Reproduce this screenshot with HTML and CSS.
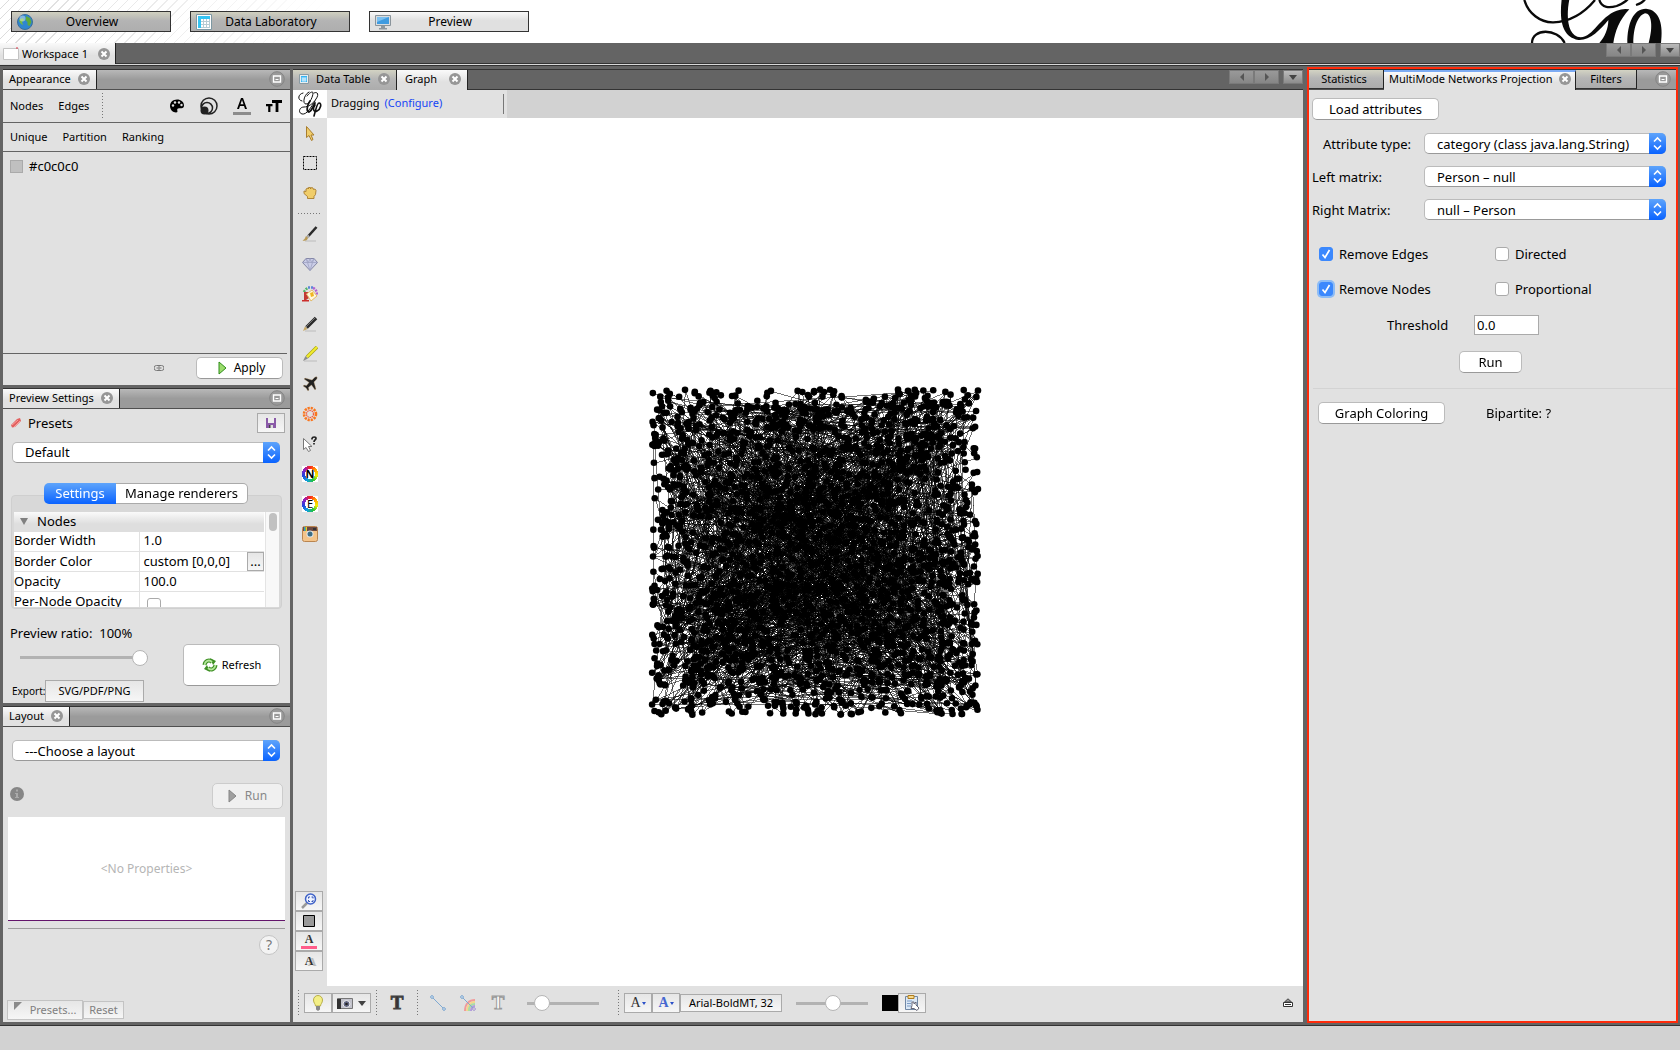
FILE: index.html
```html
<!DOCTYPE html>
<html lang="en">
<head>
<meta charset="utf-8">
<title>Gephi - Workspace 1</title>
<link rel="stylesheet" href="styles.css">
</head>
<body>
<svg class="sprite" aria-hidden="true">
  <symbol id="close" viewBox="0 0 12 12"><circle cx="6" cy="6" r="6" fill="#969696"/><path d="M3.5 3.5l5 5M8.5 3.5l-5 5" stroke="#fff" stroke-width="2"/></symbol>
  <symbol id="mini" viewBox="0 0 16 16"><circle cx="8" cy="8" r="7.3" fill="#999" stroke="#858585"/><path d="M4.5 5h7v6h-7z" fill="none" stroke="#fff" stroke-width="1.4"/><path d="M6.500 8.500h3" stroke="#fff"/></symbol>
  <symbol id="updown" viewBox="0 0 17 21"><path d="M5 8.500l3.500-3.500 3.500 3.500M5 12.500l3.500 3.500 3.500-3.500" fill="none" stroke="#fff" stroke-width="1.600"/></symbol>
  <symbol id="gephi" viewBox="0 0 26 26"><g fill="none" stroke="#111" stroke-linecap="round"><path d="M5 10C0 9 1 3 6 2M12 1C7 3 5 13 9 13c4 0 7-8 7-11 0-2-3-1-6 3" stroke-width="1"/><path d="M17 2c4-2 5 2 2 6-3 5-8 8-12 8-5 0-6 6-2 7 5 1 9-7 13-13" stroke-width="1"/><path d="M13 10c-3 4-4 11-1 11 3-1 4-6 6-9" stroke-width="1.800"/><path d="M18 14c-3 4-1 8 2 6 4-2 5-8 2-8-2 0-3 6-5 13" stroke-width="1.600"/></g></symbol>
  <symbol id="sheet" viewBox="0 0 16 16"><path d="M.5.5h15v15H.5z" fill="#fff" stroke="#7d98a3"/><path d="M2 2h12v3H2zM2 2h3v12H2z" fill="#35c4f3"/><path d="M5 7.500h9M5 10.500h9M5 13.500h9M7.500 5v9M10.500 5v9M13.500 5v9" stroke="#b6ccd4"/></symbol>
  <symbol id="sheet-small" viewBox="0 0 10 10"><path d="M.5.5h9v9h-9z" fill="#e8eef0" stroke="#8a9ba3"/><path d="M2 2h6v6H2z" fill="#35b4f3"/><path d="M2.500 4h5M2.500 6h5M4 4v4M6 4v4" stroke="#fff" stroke-width=".8"/></symbol>
</svg>

<header class="banner">
  <nav class="views">
    <button class="view"><svg viewBox="0 0 16 16"><circle cx="8" cy="8" r="7.500" fill="#2f86cf" stroke="#3a6e9c"/><path d="M3 5l3-1 1 2-2 2 1 3-2-1-2-3z" fill="#75b843"/><path d="M9 2l4 2 1.500 4-2 4-2-1V8L8.500 6z" fill="#5faa3b"/><circle cx="5.500" cy="4.500" r="3" fill="#fff" opacity=".4"/></svg><span>Overview</span></button>
    <button class="view"><svg viewBox="0 0 16 16"><use href="#sheet"/></svg><span>Data Laboratory</span></button>
    <button class="view light"><svg viewBox="0 0 16 16"><path d="M.5 1.500h15v10H.5z" fill="#d9dde0" stroke="#8a949b"/><path d="M2 3h12v7H2z" fill="#3f9be0"/><path d="M2 3h12L2 8z" fill="#7cc0f0"/><path d="M6 12h4v2h2v1.500H4V14h2z" fill="#8d979e"/></svg><span>Preview</span></button>
  </nav>
  <svg class="brand" viewBox="720 0 441 129" role="img" aria-label="Gephi">
    <g fill="none" stroke="#0a0a0a"><path d="M733 0C745 40 780 68 820 67C880 65 920 30 945 0" stroke-width="7"/><path d="M756 129C756 84 832 84 854 129" stroke-width="7"/><path d="M958 0C965 25 990 24 1010 18C1030 10 1042 0 1046-6M1068 15Q1090 8 1096-4" stroke-width="7"/></g>
    <path d="M845-2H868C858 50 862 110 902 112C940 110 960 50 1010 32Q1030 24 1048 28C1018 60 1005 95 1000 129H958C975 110 985 85 985 60C960 90 930 122 895 120C845 110 838 60 845-2Z" fill="#0a0a0a"/>
    <path d="M1042 129C1042 70 1060 26 1098 26C1140 30 1150 75 1143 129H1106C1120 80 1115 40 1095 40C1070 48 1060 90 1060 129Z" fill="#0a0a0a"/>
  </svg>
</header>

<div class="workspaces">
  <div class="tab ws"><svg class="i16" viewBox="0 0 16 14"><path d="M.5 1.500h15v11H.5z" fill="#fff" stroke="#c3c3c3"/><path d="M13 1h2" stroke="#d34"/></svg><span>Workspace 1</span><svg class="x"><use href="#close"/></svg></div>
  <div class="pager"><button aria-label="Previous"><i class="tri l"></i></button><button aria-label="Next"><i class="tri r"></i></button><button class="dd" aria-label="List"><i class="tri d"></i></button></div>
</div>

<main class="desk">
  <aside class="left">
    <section class="panel">
      <div class="tabs shaded"><div class="tab"><span>Appearance</span><svg class="x"><use href="#close"/></svg></div><svg class="min"><use href="#mini"/></svg></div>
      <div class="row elements">
        <a href="#">Nodes</a><a href="#">Edges</a><i class="vdots"></i>
        <span class="kinds">
          <svg class="i16" viewBox="0 0 16 16"><path d="M8 1.500C4 1.500 1 4.300 1 8s3 6.500 6 6.500c1.600 0 1.600-1 1.300-2-.4-1.500.5-2.300 1.700-2.300h2.500c1.500 0 2.500-1 2.500-2.700C15 4 12 1.500 8 1.500z"/><g fill="#e1e1e1"><circle cx="4" cy="7.500" r="1.200"/><circle cx="6" cy="4.500" r="1.200"/><circle cx="10" cy="4.500" r="1.200"/><circle cx="12.500" cy="7" r="1.200"/></g></svg>
          <svg class="i18" viewBox="0 0 18 18"><g fill="none" stroke="#222" stroke-width="1.500"><circle cx="9" cy="9" r="8"/><circle cx="7" cy="11" r="5.500"/></g><circle cx="4.500" cy="13.500" r="4" fill="#222"/></svg>
          <svg class="i18" viewBox="0 0 18 18"><path d="M4 12L8 1h2l4 11h-2l-1-3H7l-1 3zM7.500 7.300h3L9 3z" /><path d="M0 15h18v3H0z" fill="#8c8c8c"/></svg>
          <svg class="i16" viewBox="0 0 16 16"><path d="M6 2h10v3h-3.600v9H9.600V5H6zM0 6h6.500v2.300H4.400V14H2.200V8.300H0z"/></svg>
        </span>
      </div>
      <div class="row modes"><a href="#">Unique</a><a href="#">Partition</a><a href="#">Ranking</a></div>
      <div class="swatchrow"><i class="swatch"></i><span>#c0c0c0</span></div>
      <div class="applybar"><svg class="link" viewBox="0 0 10 6"><path d="M2.500.500h5a2.200 2.200 0 0 1 0 5h-5a2.200 2.200 0 0 1 0-5z" fill="none" stroke="#777"/><path d="M2.500 3h2M5.500 3h2M5 1v4" stroke="#777"/></svg><button class="btn apply"><svg viewBox="0 0 9 14"><path d="M1 1v12l7-6z" fill="#9bdc6c" stroke="#2f8d1b"/></svg>Apply</button></div>
    </section>

    <section class="panel">
      <div class="tabs shaded"><div class="tab"><span>Preview Settings</span><svg class="x"><use href="#close"/></svg></div><svg class="min"><use href="#mini"/></svg></div>
      <div class="presets"><svg class="i10" viewBox="0 0 10 10"><path d="M0 7l6-6 3-1 1 3-6 6-3 .5z" fill="#e2605f"/><path d="M1 7l6-5M3 9l6-6" stroke="#f6a09e"/></svg><span>Presets</span><button class="sq save" aria-label="Save preset"><svg viewBox="0 0 10 10"><path d="M0 0h10v10H0z" fill="#8a5aa8"/><path d="M2 0h6v5H2z" fill="#eee"/><path d="M3 7h4v3H3z" fill="#ddd"/><path d="M3 7h1.500v3H3z" fill="#444"/></svg></button></div>
      <div class="combo wide"><select aria-label="Preset"><option>Default</option></select><svg><use href="#updown"/></svg></div>
      <div class="segments"><button class="on">Settings</button><button>Manage renderers</button></div>
      <div class="group">
        <div class="scroll">
          <table>
            <tr><th colspan="2"><div class="cat"><i class="tri d"></i>Nodes</div></th></tr>
            <tr><td>Border Width</td><td>1.0</td></tr>
            <tr><td>Border Color</td><td><div class="cell">custom [0,0,0]<button class="sq" aria-label="Edit color">...</button></div></td></tr>
            <tr><td>Opacity</td><td>100.0</td></tr>
            <tr><td>Per-Node Opacity</td><td><input type="checkbox" aria-label="Per-Node Opacity"></td></tr>
          </table>
          <div class="track"><i></i></div>
        </div>
      </div>
      <div class="ratio">
        <div class="rleft"><label for="ratio">Preview ratio:&nbsp; 100%</label><input id="ratio" type="range" value="100">
        <div class="export"><span>Export:</span><button class="sq">SVG/PDF/PNG</button></div></div>
        <button class="btn refresh"><svg viewBox="0 0 16 16"><g fill="none" stroke="#3d8f24" stroke-width="4"><path d="M2.500 8C3 4 7 2 10 5M13.500 8C13 12 9 14 6 11"/></g><path d="M8 1l3 7 3-4zM8 15L5 8l-3 4z" fill="#3d8f24"/><g fill="none" stroke="#b4e79a" stroke-width="1.800"><path d="M2.500 8C3 4 7 2 10 5M13.500 8C13 12 9 14 6 11"/></g></svg>Refresh</button>
      </div>
    </section>

    <section class="panel">
      <div class="tabs shaded"><div class="tab"><span>Layout</span><svg class="x"><use href="#close"/></svg></div><svg class="min"><use href="#mini"/></svg></div>
      <div class="combo wide layoutsel"><select aria-label="Layout"><option>---Choose a layout</option></select><svg><use href="#updown"/></svg></div>
      <div class="runrow"><svg class="i14" viewBox="0 0 14 14"><circle cx="7" cy="7" r="7" fill="#868686"/><path d="M6 2.500h2v2H6zM5 6h3v4h1v1H5v-1h1V7H5z" fill="#aaa"/></svg><button class="btn off" disabled><svg viewBox="0 0 9 14"><path d="M1 1v12l7-6z" fill="#a0a0a0" stroke="#868686"/></svg>Run</button></div>
      <div class="props">&lt;No Properties&gt;</div>
      <div class="helpline"><button class="help" aria-label="Help">?</button></div>
      <div class="foot"><button class="sq" disabled><svg viewBox="0 0 8 8"><path d="M0 0h8L0 8z" fill="#8a8a8a"/></svg>Presets...</button><button class="sq reset" disabled>Reset</button></div>
    </section>
  </aside>

  <section class="center">
    <div class="tabs plain">
      <div class="tab dim dt"><svg class="i10"><use href="#sheet-small"/></svg><span>Data Table</span><svg class="x"><use href="#close"/></svg></div>
      <div class="tab gr"><span>Graph</span><svg class="x"><use href="#close"/></svg></div>
      <div class="pager"><button aria-label="Previous"><i class="tri l"></i></button><button aria-label="Next"><i class="tri r"></i></button><button class="dd" aria-label="List"><i class="tri d"></i></button></div>
    </div>
    <div class="infobar"><svg class="gl"><use href="#gephi" x="4" y="1" width="26" height="26"/></svg><div class="drag"><span>Dragging</span><a href="#">(Configure)</a></div></div>
    <div class="work">
      <div class="tools">
        <button aria-label="Select"><svg viewBox="0 0 16 16"><path d="M4.500 1.500v11l2.500-2 2.500 5 1.500-1-2-4.500h3z" fill="#f0cd6a" stroke="#a87d2e"/></svg></button>
        <button aria-label="Rectangle selection"><svg viewBox="0 0 16 16"><path d="M1.500 1.500h13v13h-13z" fill="none" stroke="#000" stroke-dasharray="2 1"/></svg></button>
        <button aria-label="Drag"><svg viewBox="0 0 16 16"><path d="M5.500 13.500v-2L2 8.500V6l2 .500V4l2-1 .500 1V2.500h2V4l1-1.500 1.500.500.500 1.500 1.500-.500 1 1.500-.500 4-1.500 2v2z" fill="#f0cd6a" stroke="#a87d2e" stroke-width=".9"/></svg></button>
        <i class="hdots"></i>
        <button aria-label="Brush"><svg viewBox="0 0 16 16"><path d="M3 15h11" stroke="#bbb"/><path d="M14.500 1L6 10.500" stroke="#2b2b2b" stroke-width="2.600"/><path d="M7 9.500l-2 2" stroke="#aaa" stroke-width="2.500"/><path d="M4 10l2 2c-1 3-3 3-5.500 2.500C3 13 3 12 4 10z" fill="#b99a56"/></svg></button>
        <button aria-label="Sizer"><svg viewBox="0 0 16 16"><path d="M4 2.500h8l3.500 4-7.500 8-7.500-8z" fill="#c9cce6" stroke="#8487a5"/><path d="M.5 6.500h15M4 2.500l1.500 4 2.500 8 2.500-8 1.500-4-2.500 4L8 2.500l-1.500 4z" fill="none" stroke="#9ea2c3" stroke-width=".8"/></svg></button>
        <button aria-label="Painter"><svg viewBox="0 0 16 16"><g fill="none" stroke-width="2.500" stroke-dasharray="2 1"><path d="M2 6a7 7 0 0 1 4-4" stroke="#53b56b"/><path d="M6 1.500h5" stroke="#5b86d8"/><path d="M11 2c3 1 4 4 4 7" stroke="#b363d2"/></g><path d="M2 6h5v6l-3 2-2 1z" fill="#c23a35"/><path d="M0 14h7v1.500H0z" fill="#cc2d2b"/><path d="M4.500 8l5.500-4 5 6-6 5z" fill="#fff8df" stroke="#e2bb6a"/><path d="M8 7l3-1 1 4-3 1z" fill="#f0b524"/></svg></button>
        <button aria-label="Node pencil"><svg viewBox="0 0 16 16"><path d="M3 15h11" stroke="#bbb"/><path d="M14 2L4.500 11.500" stroke="#2a2a2a" stroke-width="3.600"/><path d="M13 2L4 11" stroke="#777"/><path d="M3 10.500l2.500 2.500L1 15z" fill="#c5a765"/></svg></button>
        <button aria-label="Edge pencil"><svg viewBox="0 0 16 16"><path d="M2 15h13" stroke="#bbb"/><path d="M15 1L5 11" stroke="#a9a315" stroke-width="3.400"/><path d="M15 1L5 11" stroke="#f2ec2e" stroke-width="2"/><path d="M3.500 10l2.500 2.500L1 15z" fill="#8a8a8a"/></svg></button>
        <button aria-label="Shortest path"><svg viewBox="0 0 16 16"><path d="M15 1c-1-.5-2 0-3 1L10 4 3 2 2 3l5 3.500L4.500 9.500 2 9 1 10l3 2 2 3 1-1-.500-2.500L9.500 9l3.500 5 1-1L12 6l2-2c1-1 1.500-2 1-3z" fill="#222" stroke="#d9b98b" stroke-width=".4"/></svg></button>
        <button aria-label="Heat map"><svg viewBox="0 0 16 16"><g fill="none" stroke="#f9761f"><circle cx="8" cy="8" r="6" stroke-width="2.600" stroke-dasharray="2.200 .940"/><circle cx="8" cy="8" r="3.500" stroke="#f3543c" stroke-width="1.200" stroke-dasharray="1.500 .7"/></g></svg></button>
        <button aria-label="Edit node"><svg viewBox="0 0 16 16"><path d="M1.500 2.500v11l2.500-2 2.500 4 2-1-2-4h3.500z" fill="#fff" stroke="#777"/><path d="M10 3.500V2.500C10.500.5 14 .5 14 2.500c0 1.500-2 1.500-2 3.500M12 7v1.500" fill="none" stroke="#222" stroke-width="1.700"/></svg></button>
        <button aria-label="Color nodes" class="wheel"><span>N</span></button>
        <button aria-label="Color edges" class="wheel thin"><span>E</span></button>
        <button aria-label="Snapshot"><svg viewBox="0 0 16 16"><rect x=".5" y=".5" width="15" height="15" rx="2" fill="#f4c48a" stroke="#b98550"/><path d="M1 1h14v4H1z" fill="#6e4a42"/><path d="M2 1h1v4H2z" fill="#3c8fd0"/><path d="M3 1h1v4H3z" fill="#6bbf4b"/><path d="M4 1h1v4H4z" fill="#f0c030"/><circle cx="8" cy="8" r="3.500" fill="#dde5ea"/><circle cx="8" cy="8" r="2.500" fill="#3c6c84"/><path d="M11 2h3v2h-3z" fill="#333"/></svg></button>
        <div class="zoomset">
          <button class="sq" aria-label="Center"><svg viewBox="0 0 16 16"><path d="M1 15l5-5" stroke="#999" stroke-width="2.500"/><circle cx="9.500" cy="6" r="5" fill="#eef3ff" stroke="#3f62c8" stroke-width="1.500"/><path d="M7.500 5.500V4h1.500M10.500 4H12v1.500M12 7v1.500h-1.500M9 8.500H7.500V7" fill="none" stroke="#3554b4"/></svg></button>
          <button class="sq" aria-label="Background"><svg viewBox="0 0 16 16"><path d="M2.500 2.500h11v11h-11z" fill="#999" stroke="#000"/></svg></button>
          <button class="sq serif pink" aria-label="Label color"><span>A</span></button>
          <button class="sq serif ghost" aria-label="Label attributes"><span>A</span></button>
        </div>
      </div>
      <div class="view-area"><canvas id="graph" width="334" height="334"></canvas></div>
    </div>
    <div class="bottombar">
      <i class="vdots"></i>
      <div class="pair one"><button class="sq" aria-label="Light"><svg viewBox="0 0 16 16"><path d="M5.500 11C5.500 9 3.500 8 3.500 5a4.500 4.500 0 0 1 9 0c0 3-2 4-2 6z" fill="#f3ef86" stroke="#b8ae4a"/><path d="M6 11h4v3.500L8 16l-2-1.500z" fill="#888"/></svg></button><button class="sq cam" aria-label="Screenshot"><svg viewBox="0 0 16 16"><path d="M.5 3.500h15v10H.5z" fill="#c3c3cc" stroke="#777"/><path d="M0 4h4v10H0z" fill="#333"/><circle cx="9.500" cy="9" r="3.500" fill="#666a85" stroke="#eee"/><circle cx="9.500" cy="9" r="1.300" fill="#222"/></svg><i class="tri d"></i></button></div>
      <i class="vdots"></i><button class="plainb bigt" aria-label="Node labels">T</button><i class="vdots"></i>
      <div class="edgeset">
        <svg class="i16" viewBox="0 0 16 16"><path d="M2 2l12 12" stroke="#7fa9d2"/><circle cx="2" cy="2" r="1.300" fill="#fff" stroke="#6b9ccc"/><circle cx="14" cy="14" r="1.300" fill="#fff" stroke="#6b9ccc"/></svg>
        <svg class="i16" viewBox="0 0 16 16"><g fill="none" stroke-width="2"><path d="M5 16C5 9 9 5 15 5" stroke="#f19a9a"/><path d="M7 16c0-5 3-9 8-9" stroke="#f4d68c"/><path d="M9 16c0-4 2-7 6-7" stroke="#a9dca6"/><path d="M11 16c0-2 1-5 4-5" stroke="#b39bdc"/></g><path d="M2 2l12 12" stroke="#7fa9d2"/><circle cx="2" cy="2" r="1.300" fill="#fff" stroke="#6b9ccc"/><circle cx="14" cy="14" r="1.300" fill="#fff" stroke="#9b8ccc"/></svg>
        <button class="plainb hollow" aria-label="Edge labels">T</button>
      </div>
      <input class="s1" type="range" value="13" aria-label="Edge weight">
      <i class="vdots"></i>
      <div class="pair"><button class="sq serif fa" aria-label="Size mode">A<i class="tri d"></i></button><button class="sq serif fa blue" aria-label="Color mode">A<i class="tri d"></i></button><button class="sq font">Arial-BoldMT, 32</button></div>
      <input class="s2" type="range" value="51" aria-label="Font size">
      <div class="pair"><i class="black"></i><button class="sq" aria-label="Label settings"><svg viewBox="0 0 16 16"><path d="M1.500 1.500h12v13h-12z" fill="#dbe8f6" stroke="#7188a5"/><path d="M4 .5h6v3H4z" fill="#f6d98b" stroke="#b07c1d"/><path d="M3 6h5M3 8.500h4M3 11h4" stroke="#7c9bc4"/><path d="M8 7h2v2l2-2v3l3 3-2 2.500-3-2H7l1-3z" fill="#fff" stroke="#667"/></svg></button></div>
      <svg class="eject" viewBox="0 0 10 10"><path d="M1.500 4L5 .8 8.500 4z" fill="#999" stroke="#444"/><path d="M.5 4.500h9v4h-9z" fill="#fff" stroke="#333"/><path d="M2 6.500h6" stroke="#333"/></svg>
    </div>
  </section>

  <aside class="right">
    <div class="tabs shaded">
      <div class="tab dim st"><span>Statistics</span></div>
      <div class="tab mm"><span>MultiMode Networks Projection</span><svg class="x"><use href="#close"/></svg></div>
      <div class="tab dim fi"><span>Filters</span></div>
      <svg class="min"><use href="#mini"/></svg>
    </div>
    <form class="form" onsubmit="return false">
      <button class="btn load">Load attributes</button>
      <div class="field"><label for="attr" class="ind">Attribute type:</label><div class="combo"><select id="attr"><option>category (class java.lang.String)</option></select><svg><use href="#updown"/></svg></div></div>
      <div class="field"><label for="lm">Left matrix:</label><div class="combo"><select id="lm"><option>Person – null</option></select><svg><use href="#updown"/></svg></div></div>
      <div class="field"><label for="rm">Right Matrix:</label><div class="combo"><select id="rm"><option>null – Person</option></select><svg><use href="#updown"/></svg></div></div>
      <div class="checks">
        <label><input type="checkbox" checked>Remove Edges</label><label><input type="checkbox">Directed</label>
        <label><input type="checkbox" class="focus" checked>Remove Nodes</label><label><input type="checkbox">Proportional</label>
      </div>
      <div class="thr"><label for="thr">Threshold</label><input id="thr" type="text" value="0.0"></div>
      <button class="btn run">Run</button>
      <div class="coloring"><button class="btn load">Graph Coloring</button><span>Bipartite: ?</span></div>
    </form>
  </aside>
</main>
<footer class="status"></footer>
<script src="graph.js"></script>
</body>
</html>
```
FILE: styles.css
```css
* { box-sizing: border-box; }
html, body { height: 100%; }
body { margin: 0; display: flex; flex-direction: column; min-height: 900px; background: #646464; color: #000; font: 13px/16px "Noto Sans", "Open Sans", sans-serif; }
button, input, select { font: inherit; color: inherit; margin: 0; padding: 0; }
button { border: 0; background: none; }
a { color: inherit; text-decoration: none; }
.sprite { position: absolute; width: 0; height: 0; }
svg { flex: none; display: block; }
.i10 { width: 10px; height: 10px; }
.i14 { width: 14px; height: 14px; }
.i16 { width: 16px; height: 16px; }
.i18 { width: 18px; height: 18px; }
.x { width: 12px; height: 12px; margin-left: auto; }
.min { width: 16px; height: 16px; margin: 1px 5px 0 auto; }

.banner { display: flex; justify-content: space-between; flex: none; height: 43px; padding: 0 13px 0 11px; background: linear-gradient(90deg, transparent, #fff 340px), repeating-linear-gradient(135deg, #fff 0 6px, #dcdcdc 6px 7px); overflow: hidden; }
.views { display: flex; gap: 19px; padding-top: 11px; }
.view { display: flex; align-items: center; width: 160px; height: 21px; padding: 0 5px; border: 1px solid #333; background: linear-gradient(#d0d0bf, #b4b4b4 45%, #aeaeae); font-size: 12px; line-height: 16px; }
.view.light { background: linear-gradient(#f8f8f8, #e0e0e0 45%, #e0e0e0); }
.view svg { width: 16px; height: 16px; }
.view span { flex: 1; padding-right: 14px; }
.brand { width: 147px; height: 43px; }

.workspaces { display: flex; justify-content: space-between; flex: none; height: 23px; border-bottom: 1px solid #333; box-shadow: inset 0 -1px #d8d8d8, inset 0 -2px #333; }
.tab { display: flex; align-items: center; gap: 7px; height: 20px; padding: 0 6px 2px; border-right: 1px solid #222; background: linear-gradient(#fafafa, #e1e1e1 60%); font-size: 11px; line-height: 16px; white-space: nowrap; }
.tab.dim { background: linear-gradient(#d3d3c3, #b6b6b6 45%, #acacac); border-bottom: 1px solid #333; }
.tab.ws { width: 116px; height: 21px; padding: 0 5px 0 3px; gap: 3px; }
.pager { display: flex; margin-left: auto; }
.pager button { display: grid; place-items: center; width: 25px; height: 14px; border: 1px solid #7a7a7a; background: linear-gradient(#999, #868686); }
.pager .dd { width: 20px; margin-left: 4px; background: linear-gradient(#bbb, #8c8c8c); }
.tri { display: block; width: 0; height: 0; border: 4px solid transparent; }
.tri.l { border-right-color: #555; border-left: 0; }
.tri.r { border-left-color: #555; border-right: 0; }
.tri.d { border-top: 5px solid #444; border-bottom: 0; }

.desk { display: grid; grid-template-columns: 287px 1fr 370px; gap: 3px; flex: 1; min-height: 0; padding: 3px 4px 3px 3px; border-bottom: 1px solid #333; }
.status { flex: none; height: 24px; background: #d2d2d2; }
.left { display: grid; grid-template-rows: repeat(3, 1fr); gap: 3px; min-height: 0; }
.panel { display: flex; flex-direction: column; min-height: 0; background: #e1e1e1; }
.tabs { display: flex; flex: none; height: 21px; border-top: 1px solid #333; }
.shaded { background: linear-gradient(#b8b8b8, #9b9b9b 50%, #9b9b9b); border-bottom: 1px solid #505050; }
.plain { border-bottom: 1px solid #333; background: #646464; }
.shaded .tab { height: 19px; padding-bottom: 1px; }

.row { display: flex; align-items: center; flex: none; padding: 0 7px; border-bottom: 1px solid #646464; font-size: 11px; }
.elements { height: 33px; gap: 15px; }
.vdots { width: 1px; height: 26px; background: repeating-linear-gradient(#777 0 1px, transparent 1px 3px); }
.elements .vdots { margin-left: -2px; }
.kinds { display: flex; align-items: center; gap: 15px; margin-left: auto; padding-right: 1px; }
.modes { height: 29px; gap: 15px; }
.swatchrow { display: flex; gap: 6px; align-items: center; padding: 6px 7px; }
.swatch { width: 13px; height: 13px; background: #c0c0c0; border: 1px solid #aaa; }
.applybar { display: flex; align-items: center; justify-content: flex-end; gap: 32px; height: 32px; margin: auto 3px 0 0; padding: 0 4px 3px 0; border-top: 1px solid #646464; }
.link { width: 10px; height: 6px; }
.btn { display: flex; align-items: center; justify-content: center; height: 22px; border: 1px solid #bbb; border-bottom-color: #999; border-radius: 5px; background: #fff; white-space: nowrap; }
.apply { width: 87px; gap: 7px; padding-left: 4px; font-size: 12px; }
.apply svg, .off svg { width: 9px; height: 14px; }

.presets { display: flex; align-items: center; gap: 7px; height: 28px; flex: none; padding: 0 5px 0 8px; }
.presets .save { margin-left: auto; }
.sq { display: flex; align-items: center; justify-content: center; border: 1px solid #aaa; background: linear-gradient(#e6e6e6, #f6f6f6); }
.sq svg { width: 16px; height: 16px; }
.save { width: 28px; height: 20px; }
.presets .save svg { width: 10px; height: 10px; }
.combo { display: grid; height: 21px; }
.combo > * { grid-area: 1 / 1; }
.combo select { appearance: none; width: 100%; height: 21px; padding: 0 20px 0 12px; border: 1px solid #bbb; border-bottom-color: #999; border-radius: 5px; background: #fff; }
.combo svg { justify-self: end; width: 17px; height: 21px; border-radius: 0 5px 5px 0; background: linear-gradient(#5ea4fb, #0a63ff); pointer-events: none; }
.wide { margin: 5px 10px 0 9px; flex: none; }
.segments { display: flex; flex: none; margin: 20px 0 0 41px; height: 21px; width: 204px; z-index: 1; }
.segments button { flex: 1; border: 1px solid #aaa; border-left: 0; border-radius: 0 5px 5px 0; background: #fff; white-space: nowrap; }
.segments .on { flex: 0 0 72px; border: 0; border-radius: 5px 0 0 5px; background: linear-gradient(#5ea4fb, #0a63ff); color: #fff; }
.group { flex: none; height: 114px; margin: -9px 8px 0; padding: 16px 2px 2px; border: 1px solid #cfcfcf; border-radius: 4px; background: #d8d8d8; }
.scroll { display: flex; height: 95px; overflow: hidden; background: #fff; }
table { width: 250px; border-collapse: collapse; table-layout: fixed; }
th { height: 20px; padding: 0 6px; background: linear-gradient(#fafafa, #dedede 60%); text-align: left; font-weight: normal; }
.cat { display: flex; align-items: center; gap: 9px; height: 19px; padding-bottom: 1px; }
.cat .tri { border-top: 7px solid #808080; }
td { height: 20px; padding: 0 0 2px 4px; border-bottom: 1px solid #e1e1e1; white-space: nowrap; line-height: 16px; }
td:first-child { width: 126px; padding: 0 0 2px; border-right: 1px solid #e1e1e1; }
.cell { display: flex; justify-content: space-between; height: 16px; }
.cell .sq { width: 17px; height: 19px; margin-top: -1px; }
.track { width: 14px; margin-left: 1px; padding: 1px 3px; background: #f8f8f8; border-left: 1px solid #e4e4e4; }
.track i { display: block; width: 8px; height: 18px; border-radius: 4px; background: #c1c1c1; }
input[type=checkbox] { appearance: none; flex: none; width: 14px; height: 14px; border: 1px solid #aaa; border-radius: 3px; background: #fff; }
td input[type=checkbox] { display: block; margin: 4px 0 -4px 3px; }
input[type=checkbox]:checked { border-color: #3b88fd; background: #3b88fd url("data:image/svg+xml,%3Csvg xmlns='http://www.w3.org/2000/svg' viewBox='0 0 12 12'%3E%3Cpath d='M2.500 6.500l2.500 3 4.500-7.500' fill='none' stroke='white' stroke-width='1.700'/%3E%3C/svg%3E") center / 12px; }
input.focus { box-shadow: 0 0 0 2px #8dbcf5; }
.ratio { display: flex; justify-content: space-between; padding: 16px 10px 0 7px; }
.rleft { display: flex; flex-direction: column; align-items: flex-start; width: 150px; }
.ratio input { margin: 9px 0 0 10px; width: 128px; }
input[type=range] { appearance: none; height: 16px; background: linear-gradient(#b2b2b2, #b2b2b2) center / 100% 3px no-repeat; }
input[type=range]::-webkit-slider-thumb { appearance: none; width: 16px; height: 16px; border: 1px solid #b5b5b5; border-radius: 50%; background: #fff; }
.export { display: flex; align-items: center; margin-top: 14px; padding-left: 2px; font-size: 11px; }
.export span { width: 33px; font-size: 10px; }
.export .sq { width: 99px; height: 22px; }
.refresh { width: 97px; height: 42px; margin-top: 19px; gap: 4px; font-size: 11px; }
.refresh svg { width: 16px; height: 16px; }

.layoutsel { margin-top: 13px; }
.runrow { display: flex; justify-content: space-between; flex: none; padding: 22px 7px 0; }
.runrow .i14 { margin-top: 4px; }
.off { width: 71px; height: 26px; gap: 8px; background: #f0f0f0; border-color: #ccc; color: #888; font-size: 12px; }
.props { display: grid; place-items: center; flex: none; height: 104px; margin: 8px 5px 0; border-bottom: 1px solid #63146b; background: #fff; color: #b5b5b5; font-size: 12px; }
.helpline { display: flex; justify-content: flex-end; margin: 7px 5px 0; padding: 6px 6px; border-top: 1px solid #9e9e9e; }
.help { width: 20px; height: 20px; border: 1px solid #c4c4c4; border-radius: 50%; background: #f3f3f3; color: #777; font-size: 14px; }
.foot { display: flex; align-items: center; margin: auto 4px 2px; color: #808080; font-size: 11px; }
.foot .sq { width: 76px; height: 20px; gap: 8px; border-color: #c3c3c3; }
.foot .sq svg { width: 8px; height: 8px; margin-bottom: 8px; }
.foot .reset { width: 41px; height: 18px; }

.center { display: flex; flex-direction: column; min-width: 0; background: #e1e1e1; }
.plain .tab.dt { width: 104px; }
.tab.gr { width: 71px; padding-left: 8px; }
.plain .tab.dim { border-bottom: 0; }
.infobar { display: flex; flex: none; height: 28px; background: #d2d2d2; }
.gl { width: 34px; height: 28px; background: #fff; }
.drag { display: flex; gap: 5px; width: 180px; padding: 5px 4px; background: linear-gradient(#777, #777) right 3px center / 1px 20px no-repeat, #e1e1e1; font-size: 11px; }
.drag a { color: #1546f5; }
.work { display: flex; flex: 1; min-height: 0; }
.tools { display: flex; flex-direction: column; width: 34px; background: #e1e1e1; }
.tools > button { display: grid; place-items: center; flex: none; height: 30px; }
.tools > button svg { width: 16px; height: 16px; }
.hdots { height: 1px; margin: 5px 5px; flex: none; background: repeating-linear-gradient(90deg, #777 0 1px, transparent 1px 3px); }
.wheel span { display: grid; place-items: center; width: 16px; height: 16px; background: radial-gradient(circle at center, #fff 0 5px, transparent 5px 8px, #fff 8px), conic-gradient(#fa2020, #ffa000, #f4f000, #20c040, #10a0e0, #2040e0, #9020c0, #fa2020); font: bold 11px/16px "Noto Sans", sans-serif; }
.wheel.thin span { font-weight: normal; }
.zoomset { margin: auto 4px 15px 2px; }
.zoomset .sq { width: 28px; height: 20px; }
.serif { font: bold 12px/14px "Liberation Serif", serif; color: #333; }
.pink span { width: 16px; height: 16px; line-height: 12px; border-bottom: 3px solid #ff5c8a; }
.ghost span { text-shadow: 3px 1px #bbb; }
.view-area { display: grid; place-items: center; flex: 1; background: #fff; }
.view-area canvas { display: block; }

.bottombar { display: flex; align-items: center; flex: none; height: 36px; padding: 0 10px 2px 5px; }
.pair { display: flex; align-items: center; }
.pair .sq { width: 28px; height: 20px; }
.pair.one { margin: 0 5px; }
.pair .cam { width: 39px; gap: 5px; }
.plainb { width: 40px; font: bold 19px/20px "Liberation Serif", serif; color: #333; -webkit-text-stroke: 1px #444; }
.edgeset { display: flex; align-items: center; gap: 14px; margin-left: 12px; }
.hollow { width: 16px; color: #fff; -webkit-text-stroke: 1px #999; }
.s1 { width: 72px; margin: 0 19px 0 21px; }
.s2 { width: 72px; margin: 0 14px; }
.bottombar .s1 + .vdots { margin-right: 5px; }
.pair .fa { font-size: 14px; font-weight: normal; gap: 1px; }
.fa .tri { border-width: 3px 2px 0; border-top-color: #2a50c8; }
.pair .fa.blue { color: #4668d0; font-weight: bold; }
.pair .font { width: 102px; height: 18px; font-size: 11px; white-space: nowrap; }
.black { width: 16px; height: 16px; background: #000; }
.eject { width: 10px; height: 10px; margin-left: auto; }

.right { display: flex; flex-direction: column; margin: 0 0 1px 3px; outline: 2px solid #ff2b0b; background: #e1e1e1; }
.tab.st, .tab.fi { justify-content: center; width: 75px; }
.tab.st { padding-right: 10px; }
.tab.fi { width: 61px; }
.right .tabs .tab.mm { width: 192px; height: 20px; padding: 0 5px 4px; border-top: 2px solid #7dabf3; }
.form { padding: 8px 10px 0 3px; }
.load { width: 127px; }
.field { display: grid; grid-template-columns: 1fr 242px; align-items: center; margin-top: 12px; }
.load + .field { margin-top: 13px; }
.ind { padding-left: 11px; }
.checks { display: grid; grid-template-columns: 176px 1fr; row-gap: 19px; padding: 26px 0 0 7px; }
.checks label { display: flex; align-items: center; gap: 6px; }
.thr { display: flex; align-items: center; gap: 24px; margin-top: 18px; padding-left: 75px; }
.thr input { width: 65px; height: 20px; padding: 0 2px; border: 1px solid #aaa; background: #fff; }
.thr label { width: 63px; }
.run { width: 63px; margin: 16px 0 0 147px; }
.coloring { display: flex; align-items: center; gap: 41px; margin: 15px -10px 0 1px; padding: 13px 0 0 5px; border-top: 1px solid #d3d3d3; }
```
FILE: graph.js
```js
// Random layout of a large network: nodes in a square, thin edges between them.
(function () {
  var c = document.getElementById('graph');
  var g = c.getContext('2d');
  var size = c.width;
  var seed = 20117;
  function rnd() {
    seed = (seed * 1664525 + 1013904223) % 4294967296;
    return seed / 4294967296;
  }
  function spread() {
    return 4 + rnd() * 326;
  }
  var nodes = [];
  var i;
  for (i = 0; i < 2150; i++) {
    nodes.push([spread(), spread()]);
  }

  // Edges are plotted pixel by pixel, without smoothing, so that gaps stay crisp.
  var img = g.createImageData(size, size);
  for (i = 0; i < 1700; i++) {
    var a = nodes[Math.floor(rnd() * nodes.length)];
    var b = nodes[Math.floor(rnd() * nodes.length)];
    var dx = b[0] - a[0];
    var dy = b[1] - a[1];
    var steps = Math.ceil(Math.max(Math.abs(dx), Math.abs(dy)));
    for (var s = 0; s <= steps; s++) {
      var x = Math.round(a[0] + dx * s / steps);
      var y = Math.round(a[1] + dy * s / steps);
      var p = (y * size + x) * 4 + 3;
      img.data[p] = 255 - (255 - img.data[p]) * 0.45;
    }
  }
  g.putImageData(img, 0, 0);

  g.fillStyle = '#000';
  nodes.forEach(function (n) {
    g.beginPath();
    g.arc(n[0], n[1], 3.3, 0, Math.PI * 2);
    g.fill();
  });
})();
```
